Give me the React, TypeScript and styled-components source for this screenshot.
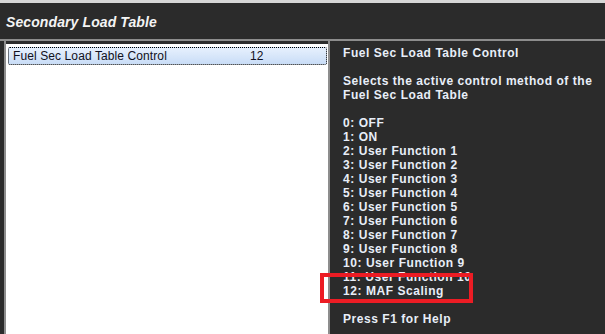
import React from 'react';
import styled, { createGlobalStyle } from 'styled-components';

const GlobalStyle = createGlobalStyle`
  html, body {
    margin: 0;
    padding: 0;
    background: #2b2b2b;
    overflow: hidden;
  }
  #root {
    width: 605px;
    height: 334px;
  }
`;

const OPTIONS = [
  'OFF',
  'ON',
  'User Function 1',
  'User Function 2',
  'User Function 3',
  'User Function 4',
  'User Function 5',
  'User Function 6',
  'User Function 7',
  'User Function 8',
  'User Function 9',
  'User Function 10',
  'MAF Scaling',
];

function App() {
  return (
    <Window>
      <GlobalStyle />
      <TopStrip />
      <Header>
        <Title>Secondary Load Table</Title>
      </Header>
      <Divider />
      <Body>
        <ListPane>
          <List>
            <Row selected>
              <Name>Fuel Sec Load Table Control</Name>
              <Value>12</Value>
            </Row>
          </List>
        </ListPane>
        <HelpPane>
          <HelpLine>Fuel Sec Load Table Control</HelpLine>
          <Blank />
          <HelpLine>Selects the active control method of the</HelpLine>
          <HelpLine>Fuel Sec Load Table</HelpLine>
          <Blank />
          {OPTIONS.map((o, i) => (
            <HelpLine key={i}>
              {i}: {o}
            </HelpLine>
          ))}
          <Blank />
          <HelpLine>Press F1 for Help</HelpLine>
        </HelpPane>
      </Body>
      <Highlight />
    </Window>
  );
}

const Window = styled.div`
  position: relative;
  display: flex;
  flex-direction: column;
  width: 605px;
  height: 334px;
  background: #2b2b2b;
  overflow: hidden;
`;
const TopStrip = styled.div`
  height: 3px;
  background: #d6d6d6;
`;
const Header = styled.div`
  height: 36px;
  display: flex;
  align-items: center;
  padding-left: 6px;
  background: #2b2b2b;
`;
const Title = styled.div`
  font-family: 'Liberation Sans', Arial, sans-serif;
  font-size: 14px;
  font-weight: bold;
  font-style: italic;
  letter-spacing: 0.1px;
  color: #f4f4f4;
  margin-top: 2px;
`;
const Divider = styled.div`
  height: 2px;
  background: #8d8d8d;
`;
const Body = styled.div`
  flex: 1;
  display: flex;
  padding-left: 4px;
`;
const ListPane = styled.div`
  width: 322px;
  display: flex;
  flex-direction: column;
  padding-top: 3px;
  border-left: 2px solid #8d8d8d;
  border-right: 2px solid #8d8d8d;
`;
const List = styled.div`
  flex: 1;
  background: #ffffff;
  padding: 3px 1px 0 2px;
`;
const Row = styled.div<{ selected?: boolean }>`
  display: grid;
  grid-template-columns: 237px 1fr;
  height: 16px;
  align-items: center;
  padding-left: 4px;
  border: 1px dotted #000;
  border-radius: 2px;
  background: ${(p) =>
    p.selected ? 'linear-gradient(#e6f0fd, #c9ddf7)' : 'transparent'};
  font-family: 'Liberation Sans', Arial, sans-serif;
  font-size: 12px;
  letter-spacing: 0.1px;
  color: #101020;
`;
const Name = styled.span``;
const Value = styled.span``;
const HelpPane = styled.div`
  flex: 1;
  padding: 5px 0 0 13px;
  font-family: 'Liberation Sans', Arial, sans-serif;
  font-size: 12px;
  font-weight: bold;
  letter-spacing: 0.55px;
  color: #e8eef8;
`;
const HelpLine = styled.div`
  height: 14px;
  line-height: 14px;
  white-space: nowrap;
`;
const Blank = styled.div`
  height: 14px;
`;
const Highlight = styled.div`
  position: absolute;
  left: 320px;
  top: 273px;
  width: 145px;
  height: 22px;
  border: 4px solid #ec1c24;
  pointer-events: none;
`;

export default App;
